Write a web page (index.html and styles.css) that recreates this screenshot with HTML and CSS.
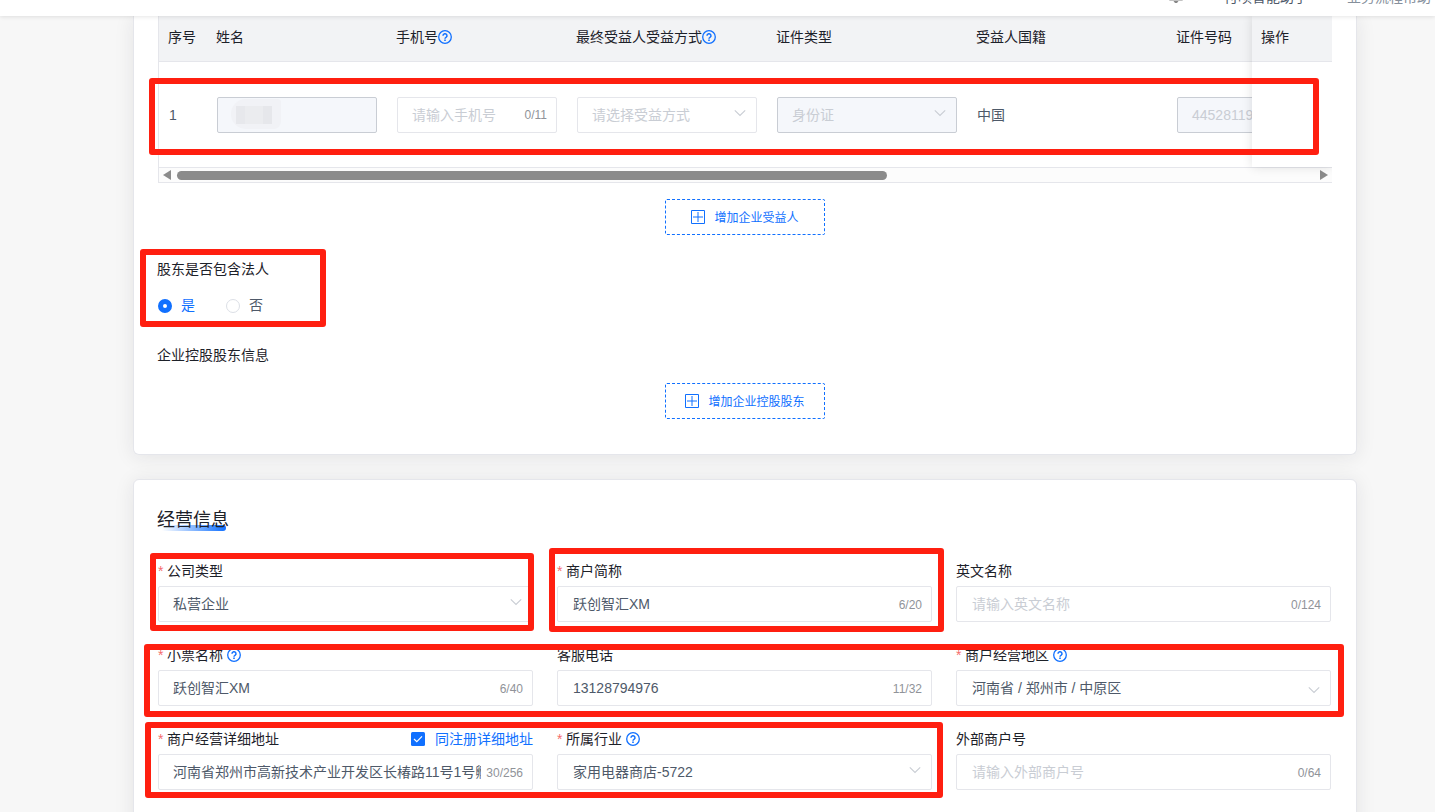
FILE: index.html
```html
<!DOCTYPE html>
<html lang="zh-CN">
<head>
  <meta charset="UTF-8">
  <meta name="viewport" content="width=device-width, initial-scale=1.0">
  <title>经营信息</title>
  <link rel="stylesheet" href="styles.css">
</head>
<body>
  <!-- Shared icons -->
  <svg class="icon-defs" width="0" height="0">
    <symbol id="icon-help" viewBox="0 0 14 14">
      <circle cx="7" cy="7" r="6.3" fill="none" stroke="currentColor" stroke-width="1.3"/>
      <path d="M5 5.700a2 1.900 0 1 1 3 1.600c-.7.4-1 .7-1 1.400" fill="none" stroke="currentColor" stroke-width="1.500"/>
      <path d="M6.200 9.500h1.600v1.400H6.200z" fill="currentColor"/>
    </symbol>
    <symbol id="icon-arrow" viewBox="0 0 12 8">
      <path d="M.8 1.300 6 6.500l5.200-5.200" fill="none" stroke="currentColor" stroke-width="1.100"/>
    </symbol>
    <symbol id="icon-add" viewBox="0 0 14 14">
      <path d="M.5.5h13v13H.5zM7 2v10M2 7h10" fill="none" stroke="currentColor"/>
    </symbol>
  </svg>

  <header class="topbar">
    <svg class="bell" width="14" height="16" viewBox="0 0 14 16"><path d="M2 12V7a5 5 0 0 1 10 0v5l2 1.500H0zM4.500 14h5L8 16H6z" fill="currentColor"/></svg>
    <span class="topbar-link dark">付呗智能助手</span>
    <span class="topbar-link">业务流程帮助</span>
  </header>

  <main class="page">
    <section class="card card-holders">
      <div class="table">
        <div class="table-row table-head">
          <div class="cell">序号</div>
          <div class="cell">姓名</div>
          <div class="cell">手机号<svg class="help"><use href="#icon-help"/></svg></div>
          <div class="cell">最终受益人受益方式<svg class="help"><use href="#icon-help"/></svg></div>
          <div class="cell">证件类型</div>
          <div class="cell">受益人国籍</div>
          <div class="cell">证件号码</div>
        </div>
        <div class="table-row table-body">
          <div class="cell">1</div>
          <div class="cell"><div class="input disabled"><span class="mask"></span></div></div>
          <div class="cell"><div class="input placeholder">请输入手机号<span class="count">0/11</span></div></div>
          <div class="cell"><div class="input placeholder">请选择受益方式<svg class="arrow"><use href="#icon-arrow"/></svg></div></div>
          <div class="cell"><div class="input disabled">身份证<svg class="arrow"><use href="#icon-arrow"/></svg></div></div>
          <div class="cell">中国</div>
          <div class="cell"><div class="input disabled">44528119</div></div>
        </div>
        <div class="scrollbar">
          <span class="scroll-left"></span>
          <span class="scroll-thumb"></span>
          <span class="scroll-right"></span>
        </div>
        <!-- Fixed right column -->
        <div class="fixed-column">
          <div class="fixed-head">操作</div>
        </div>
      </div>

      <button class="add-btn"><svg class="add-icon"><use href="#icon-add"/></svg><span>增加企业受益人</span></button>

      <div class="group-label">股东是否包含法人</div>
      <div class="radio-group">
        <label class="radio checked"><span class="dot"></span>是</label>
        <label class="radio"><span class="dot"></span>否</label>
      </div>
      <div class="group-label">企业控股股东信息</div>
      <button class="add-btn add-shareholder"><svg class="add-icon"><use href="#icon-add"/></svg><span>增加企业控股股东</span></button>
    </section>

    <section class="card card-business">
      <h2 class="card-title">经营信息</h2>
      <div class="form-grid">
        <div class="field">
          <div class="label"><i>*</i>公司类型</div>
          <div class="input">私营企业<svg class="arrow"><use href="#icon-arrow"/></svg></div>
        </div>
        <div class="field">
          <div class="label"><i>*</i>商户简称</div>
          <div class="input">跃创智汇XM<span class="count">6/20</span></div>
        </div>
        <div class="field">
          <div class="label">英文名称</div>
          <div class="input placeholder">请输入英文名称<span class="count">0/124</span></div>
        </div>
        <div class="field">
          <div class="label"><i>*</i>小票名称<svg class="help"><use href="#icon-help"/></svg></div>
          <div class="input">跃创智汇XM<span class="count">6/40</span></div>
        </div>
        <div class="field">
          <div class="label">客服电话</div>
          <div class="input">13128794976<span class="count">11/32</span></div>
        </div>
        <div class="field">
          <div class="label"><i>*</i>商户经营地区<svg class="help"><use href="#icon-help"/></svg></div>
          <div class="input cascader">河南省 / 郑州市 / 中原区<svg class="arrow"><use href="#icon-arrow"/></svg></div>
        </div>
        <div class="field">
          <div class="label"><i>*</i>商户经营详细地址
            <span class="same-address"><svg class="checkbox" viewBox="0 0 14 14"><rect width="14" height="14" rx="1.500" fill="currentColor"/><path d="M3 7l2.800 2.700L11 4.300" fill="none" stroke="#fff" stroke-width="1.200"/></svg>同注册详细地址</span>
          </div>
          <div class="input"><span class="value">河南省郑州市高新技术产业开发区长椿路11号1号孵</span><span class="count">30/256</span></div>
        </div>
        <div class="field">
          <div class="label"><i>*</i>所属行业<svg class="help"><use href="#icon-help"/></svg></div>
          <div class="input">家用电器商店-5722<svg class="arrow"><use href="#icon-arrow"/></svg></div>
        </div>
        <div class="field">
          <div class="label">外部商户号</div>
          <div class="input placeholder">请输入外部商户号<span class="count">0/64</span></div>
        </div>
      </div>
    </section>
  </main>

  <!-- Highlight frames over the page -->
  <div class="mark mark-beneficiary"></div>
  <div class="mark mark-legal"></div>
  <div class="mark mark-type"></div>
  <div class="mark mark-short-name"></div>
  <div class="mark mark-receipt"></div>
  <div class="mark mark-address"></div>
</body>
</html>
```
FILE: styles.css
```css
* {
  box-sizing: border-box;
}
body {
  position: relative;
  margin: 0;
  height: 812px;
  overflow: hidden;
  background: #f7f7f7;
  color: #1d2129;
  font-family: "Liberation Sans", "Noto Sans CJK SC", sans-serif;
  font-size: 14px;
  line-height: 20px;
}
.icon-defs {
  position: absolute;
}
.topbar {
  position: relative;
  z-index: 3;
  display: flex;
  justify-content: flex-end;
  align-items: flex-end;
  height: 16px;
  padding: 0 4px 9px 0;
  background: #fff;
  box-shadow: 0 1px 4px rgba(0, 0, 0, 0.1);
}
.bell {
  flex: none;
  margin: 0 41px 4px 0;
  color: #888;
}
.topbar-link {
  color: #86909c;
  white-space: nowrap;
}
.topbar-link.dark {
  margin-right: 39px;
  color: #4e5969;
}
.page {
  width: 1224px;
  margin-left: 133px;
}
.card {
  padding: 0 24px;
  background: #fff;
  border: 1px solid #e5e6eb;
  border-radius: 6px;
  box-shadow: 0 2px 20px rgba(29, 33, 41, 0.09);
}
.card-holders {
  height: 439px;
  border-top: 0;
  border-radius: 0 0 6px 6px;
}
.card-business {
  height: 370px;
  margin-top: 24px;
  padding-top: 28px;
}

/* Beneficiary table */
.table {
  position: relative;
  width: 1174px;
  height: 167px;
  overflow: hidden;
  border-left: 1px solid #e5e6eb;
  border-bottom: 1px solid #e5e6eb;
}
.table-row {
  display: grid;
  grid-template-columns: 48px 180px 180px 200px 200px 200px 200px;
  align-items: center;
  border-bottom: 1px solid #e5e6eb;
}
.table-head {
  height: 46px;
  padding-bottom: 3px;
  background: #f2f3f5;
}
.table-head .cell {
  padding-left: 9px;
}
.table-body {
  height: 106px;
  color: #4e5969;
}
.cell {
  display: flex;
  align-items: center;
  padding: 0 10px;
  white-space: nowrap;
}
.cell .input {
  width: 100%;
}
.fixed-column {
  position: absolute;
  top: 0;
  right: 0;
  width: 80px;
  height: 151px;
  background: #fff;
  box-shadow: 0 0 10px rgba(0, 0, 0, 0.12);
}
.fixed-head {
  height: 46px;
  padding: 11px 9px 0;
  background: #f2f3f5;
  border-bottom: 1px solid #e5e6eb;
}
.scrollbar {
  display: flex;
  align-items: center;
  height: 14px;
  padding: 0 4px;
  background: #fcfcfc;
}
.scroll-left,
.scroll-right {
  border: 5px solid transparent;
}
.scroll-left {
  border-width: 5px 8px 5px 0;
  border-right-color: #8b8b8b;
}
.scroll-right {
  margin-left: auto;
  border-width: 5px 0 5px 8px;
  border-left-color: #8b8b8b;
}
.scroll-thumb {
  width: 710px;
  height: 9px;
  margin-left: 6px;
  border-radius: 5px;
  background: #8b8b8b;
}
.mask {
  width: 50px;
  height: 30px;
  margin: -2px 0 0 -1px;
  border-radius: 16px 4px 8px 16px;
  background: linear-gradient(90deg, #e7e8ec 25%, #ebecef 25% 75%, #e6e7eb 75%) 5px 7px / 36px 18px no-repeat #f1f2f6;
}

/* Inputs */
.input {
  position: relative;
  display: flex;
  align-items: center;
  height: 36px;
  padding: 0 9px 0 14px;
  border: 1px solid #e5e6eb;
  border-radius: 2px;
  background: #fff;
  color: #4e5969;
  white-space: nowrap;
}
.field:not(:nth-child(3n + 1)) .input {
  padding-left: 15px;
}
.input.placeholder {
  color: #c9cdd4;
}
.input.disabled {
  border-color: #c9cdd4;
  background: #f5f7fb;
  color: #c9cdd4;
}
.count {
  margin-left: auto;
  color: #909399;
  font-size: 12px;
}
.input .count {
  padding-top: 1px;
}
.value {
  width: 308px;
  overflow: hidden;
}
.arrow {
  width: 12px;
  height: 8px;
  margin: -4px 1px 0 auto;
  color: #c9cdd4;
}
.cascader .arrow {
  margin-top: 4px;
}
.help {
  flex: none;
  width: 14px;
  height: 14px;
  color: #1070ff;
}

.add-btn {
  display: flex;
  justify-content: center;
  align-items: center;
  width: 160px;
  height: 36px;
  margin: 16px auto 0;
  padding: 0;
  border: 1px dashed #1070ff;
  border-radius: 2px;
  background: #fff;
  color: #1070ff;
  font-family: inherit;
  font-size: 12px;
}
.add-btn span {
  padding-bottom: 1px;
}
.add-icon {
  width: 14px;
  height: 14px;
  margin-right: 9px;
}
.group-label {
  margin: 24px 0 0 -1px;
}
.radio-group {
  display: flex;
  gap: 31px;
  margin: 16px 0 30px;
}
.radio {
  display: flex;
  align-items: center;
  color: #4e5969;
}
.radio.checked {
  color: #1070ff;
}
.dot {
  width: 14px;
  height: 14px;
  margin: 2px 9px 0 0;
  border: 1px solid #dcdfe6;
  border-radius: 50%;
}
.checked .dot {
  border: 5px solid #1070ff;
}
.add-shareholder {
  margin-top: 18px;
}

/* Business form */
.card-title {
  display: inline-block;
  position: relative;
  z-index: 0;
  margin: 0 0 0 -1px;
  font-size: 18px;
  font-weight: 400;
  line-height: 24px;
}
.card-title::after {
  content: "";
  position: absolute;
  z-index: -1;
  right: 3px;
  bottom: 1px;
  width: 64px;
  height: 6px;
  border-radius: 0 3px 3px 0;
  background: linear-gradient(90deg, #fff, #1070ff);
}
.form-grid {
  display: grid;
  grid-template-columns: repeat(3, 375px);
  gap: 24px;
  margin-top: 30px;
}
.field {
  height: 60px;
}
.label {
  display: flex;
  align-items: center;
  height: 24px;
  padding-bottom: 6px;
}
.label i {
  width: 9px;
  color: #f56c6c;
  font-style: normal;
}
.label .help {
  margin-left: 4px;
}
.same-address {
  display: flex;
  align-items: center;
  margin-left: auto;
  color: #1070ff;
}
.checkbox {
  width: 14px;
  height: 14px;
  margin-right: 10px;
}

/* Highlight frames */
.mark {
  position: absolute;
  z-index: 4;
  border: 6px solid #ff1f10;
  border-radius: 3px;
}
.mark-beneficiary {
  left: 149px;
  top: 78px;
  width: 1170px;
  height: 77px;
}
.mark-legal {
  left: 140px;
  top: 249px;
  width: 186px;
  height: 78px;
}
.mark-type {
  left: 150px;
  top: 553px;
  width: 384px;
  height: 78px;
}
.mark-short-name {
  left: 549px;
  top: 548px;
  width: 395px;
  height: 84px;
}
.mark-receipt {
  left: 144px;
  top: 644px;
  width: 1200px;
  height: 73px;
}
.mark-address {
  left: 145px;
  top: 722px;
  width: 798px;
  height: 76px;
}
```
